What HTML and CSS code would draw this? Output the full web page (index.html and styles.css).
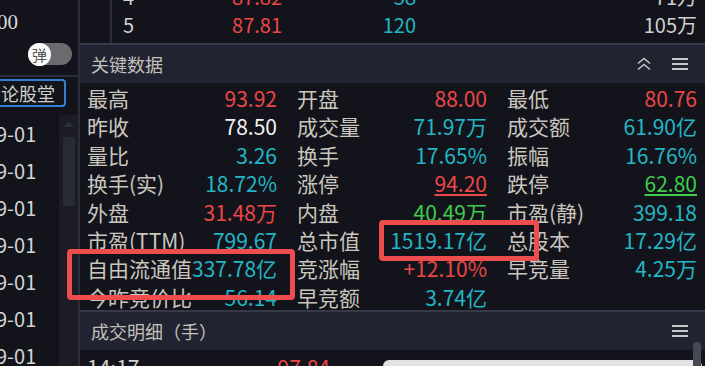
FILE: index.html
```html
<!DOCTYPE html>
<html lang="zh-CN">
<head>
<meta charset="utf-8">
<title>关键数据</title>
<link rel="stylesheet" href="styles.css">
</head>
<body>
<div class="app">
  <aside class="left">
    <div class="left-top">
      <div class="price">00</div>
      <div class="toggle-row"><span class="toggle"><span class="knob">弹</span></span></div>
    </div>
    <div class="btn-row"><span class="lgt-btn">论股堂</span></div>
    <div class="list-wrap">
      <ul class="dates">
        <li>9-01</li><li>9-01</li><li>9-01</li><li>9-01</li><li>9-01</li><li>9-01</li><li>9-01</li>
      </ul>
      <div class="vscroll"><span class="arrow"></span><span class="thumb"></span></div>
    </div>
  </aside>
  <main class="main">
    <section class="book">
      <div class="book-side"></div>
      <div class="book-rows">
        <div class="book-row"><span class="lvl">4</span><span class="px red">87.82</span><span class="vol cyan">58</span><span class="amt">71万</span></div>
        <div class="book-row"><span class="lvl">5</span><span class="px red">87.81</span><span class="vol cyan">120</span><span class="amt">105万</span></div>
      </div>
    </section>
    <header class="panel-head">
      <span class="title">关键数据</span>
      <span class="tools">
        <svg class="ico" width="16" height="16" viewBox="0 0 16 16"><path d="M2 7.5L8 2.5L14 7.5M2 13.5L8 8.5L14 13.5" fill="none" stroke="#c4c4c4" stroke-width="1.6"/></svg>
        <svg class="ico" width="16" height="16" viewBox="0 0 16 16"><path d="M0 3H16M0 8H16M0 13H16" fill="none" stroke="#c8c8c8" stroke-width="1.8"/></svg>
      </span>
    </header>
    <div class="kdata">
      <div class="cell"><span class="k">最高</span><span class="v red">93.92</span></div>
      <div class="cell"><span class="k">开盘</span><span class="v red">88.00</span></div>
      <div class="cell"><span class="k">最低</span><span class="v red">80.76</span></div>

      <div class="cell"><span class="k">昨收</span><span class="v white">78.50</span></div>
      <div class="cell"><span class="k">成交量</span><span class="v cyan">71.97万</span></div>
      <div class="cell"><span class="k">成交额</span><span class="v cyan">61.90亿</span></div>

      <div class="cell"><span class="k">量比</span><span class="v cyan">3.26</span></div>
      <div class="cell"><span class="k">换手</span><span class="v cyan">17.65%</span></div>
      <div class="cell"><span class="k">振幅</span><span class="v cyan">16.76%</span></div>

      <div class="cell"><span class="k">换手(实)</span><span class="v cyan">18.72%</span></div>
      <div class="cell"><span class="k">涨停</span><span class="v red ul">94.20</span></div>
      <div class="cell"><span class="k">跌停</span><span class="v green ul">62.80</span></div>

      <div class="cell"><span class="k">外盘</span><span class="v red">31.48万</span></div>
      <div class="cell"><span class="k">内盘</span><span class="v green">40.49万</span></div>
      <div class="cell"><span class="k">市盈(静)</span><span class="v cyan">399.18</span></div>

      <div class="cell"><span class="k">市盈(TTM)</span><span class="v cyan">799.67</span></div>
      <div class="cell"><span class="k">总市值</span><span class="v cyan">1519.17亿</span></div>
      <div class="cell"><span class="k">总股本</span><span class="v cyan">17.29亿</span></div>

      <div class="cell"><span class="k">自由流通值</span><span class="v cyan">337.78亿</span></div>
      <div class="cell"><span class="k">竞涨幅</span><span class="v red">+12.10%</span></div>
      <div class="cell"><span class="k">早竞量</span><span class="v cyan">4.25万</span></div>

      <div class="cell"><span class="k">今昨竞价比</span><span class="v cyan">56.14</span></div>
      <div class="cell"><span class="k">早竞额</span><span class="v cyan">3.74亿</span></div>
      <div class="cell"></div>
    </div>
    <header class="panel-head head-2">
      <span class="title">成交明细（手）</span>
      <span class="tools">
        <svg class="ico" width="16" height="16" viewBox="0 0 16 16"><path d="M0 3H16M0 8H16M0 13H16" fill="none" stroke="#c8c8c8" stroke-width="1.8"/></svg>
      </span>
    </header>
    <div class="trades">
      <div class="trade-row"><span class="t">14:17</span><span class="tp red">97.84</span></div>
    </div>
  </main>
</div>
<div class="popup"></div>
<div class="scroll-thumb"></div>
<div class="mark mark-1"></div>
<div class="mark mark-2"></div>
</body>
</html>
```
FILE: styles.css
```css
* { box-sizing: border-box; }
html, body { margin: 0; padding: 0; }
body {
  background: #13141b;
  font-family: "Noto Sans CJK SC", "Noto Sans", sans-serif;
  color: #cac6be;
  width: 705px;
  height: 366px;
  overflow: hidden;
  position: relative;
}
.app { display: flex; height: 366px; overflow: hidden; }
.red { color: #ec4646; }
.cyan { color: #22b6c6; }
.green { color: #3ccd4c; }
.white { color: #f2f2f2; }

/* left panel */
.left {
  width: 80px;
  flex: none;
  border-right: 2px solid #2b2d3a;
  display: flex;
  flex-direction: column;
  overflow: hidden;
}
.left-top {
  flex: none;
  height: 77px;
  border-bottom: 2px solid #2b2d3a;
  display: flex;
  flex-direction: column;
}
.price {
  font-family: "Liberation Serif", serif;
  font-size: 21px;
  line-height: 21px;
  color: #d8d8d8;
  margin: 12px 0 0 -3px;
}
.toggle-row { display: flex; margin-top: 10px; padding-left: 28px; }
.toggle {
  width: 44px; height: 22px; border-radius: 11px;
  background: #6a6a6f;
  display: flex; align-items: center;
}
.knob {
  width: 23px; height: 23px; border-radius: 50%;
  background: #fafafa;
  color: #555;
  font-size: 15px; line-height: 23px;
  text-align: center;
}
.btn-row { flex: none; height: 38px; padding-top: 2px; }
.lgt-btn {
  display: inline-block;
  height: 28px;
  margin-left: -10px;
  padding: 0 9px 0 9px;
  border: 2px solid #2f7fd2;
  border-radius: 4px;
  font-size: 18px;
  line-height: 24px;
  color: #d0d0d0;
}
.list-wrap { flex: 1; min-height: 0; display: flex; overflow: hidden; }
.dates {
  list-style: none; margin: 0; padding: 0;
  flex: 1;
}
.dates li {
  height: 37px;
  line-height: 37px;
  font-size: 20px;
  color: #d4d4d4;
  margin-left: -4px;
}
.vscroll {
  width: 19px;
  background: #1b1c24;
  display: flex; flex-direction: column; align-items: center;
}
.arrow {
  margin-top: 7px;
  width: 0; height: 0;
  border-left: 5px solid transparent;
  border-right: 5px solid transparent;
  border-bottom: 5px solid #2e303c;
}
.thumb {
  margin-top: 10px;
  width: 12px; height: 69px;
  background: #282a36;
  border-radius: 2px;
}

/* main */
.main { flex: 1; display: flex; flex-direction: column; min-width: 0; overflow: hidden; }
.book {
  flex: none;
  height: 45px;
  border-bottom: 2px solid #393c4b;
  display: flex;
  overflow: hidden;
}
.book-side { width: 32px; border-right: 2px solid #2b2d3a; }
.book-rows {
  flex: 1;
  display: flex; flex-direction: column; justify-content: flex-end;
  padding-bottom: 4px;
}
.book-row {
  flex: none;
  height: 28px;
  display: grid;
  grid-template-columns: 60px 110px 134px 1fr;
  padding-right: 8px;
  align-items: center;
  font-size: 20px;
  line-height: 28px;
}
.lvl { padding-left: 11px; color: #d0d0d0; }
.px, .vol, .amt { text-align: right; }
.amt { color: #d0d0d0; }

.panel-head {
  height: 38px;
  flex: none;
  background: #212330;
  display: flex; align-items: center; justify-content: space-between;
  padding: 0 17px 0 11px;
}
.panel-head .title { font-size: 18px; color: #c2c0bc; }
.tools { display: flex; gap: 20px; align-items: center; }
.ico { display: block; }
.head-2 { border-top: 2px solid #363948; height: 40px; }

.kdata {
  flex: none;
  height: 227px;
  overflow: hidden;
  padding: 1px 0 0 7px;
  display: grid;
  grid-template-columns: 190px 190px 190px;
  grid-auto-rows: 28.4px;
  column-gap: 20px;
  align-content: start;
}
.cell {
  display: flex; justify-content: space-between; align-items: center;
  white-space: nowrap;
  font-size: 21px;
  line-height: 28.4px;
}
.k { color: #cac6be; }
.v { flex: none; }
.ul { text-decoration: underline; text-underline-offset: 2px; text-decoration-thickness: 1.5px; }

.trades { flex: 1; min-height: 0; overflow: hidden; padding: 3px 0 0 7px; }
.trade-row {
  display: grid; grid-template-columns: 140px 103px;
  font-size: 21px; line-height: 28px;
}
.t { color: #d0d0d0; }
.tp { text-align: right; }

/* overlays */
.popup {
  position: absolute; left: 383px; top: 360px;
  width: 319px; height: 20px;
  background: #e2e2e4;
  border-radius: 6px;
}
.scroll-thumb {
  position: absolute; left: 693px; top: 342px;
  width: 8px; height: 30px;
  background: #464853;
  border-radius: 4px;
}
.mark {
  position: absolute;
  border: 5px solid #ee4d4d;
  border-radius: 4px;
}
.mark-1 { left: 67px; top: 249px; width: 228px; height: 51px; }
.mark-2 { left: 379px; top: 220px; width: 160px; height: 41px; }
```
